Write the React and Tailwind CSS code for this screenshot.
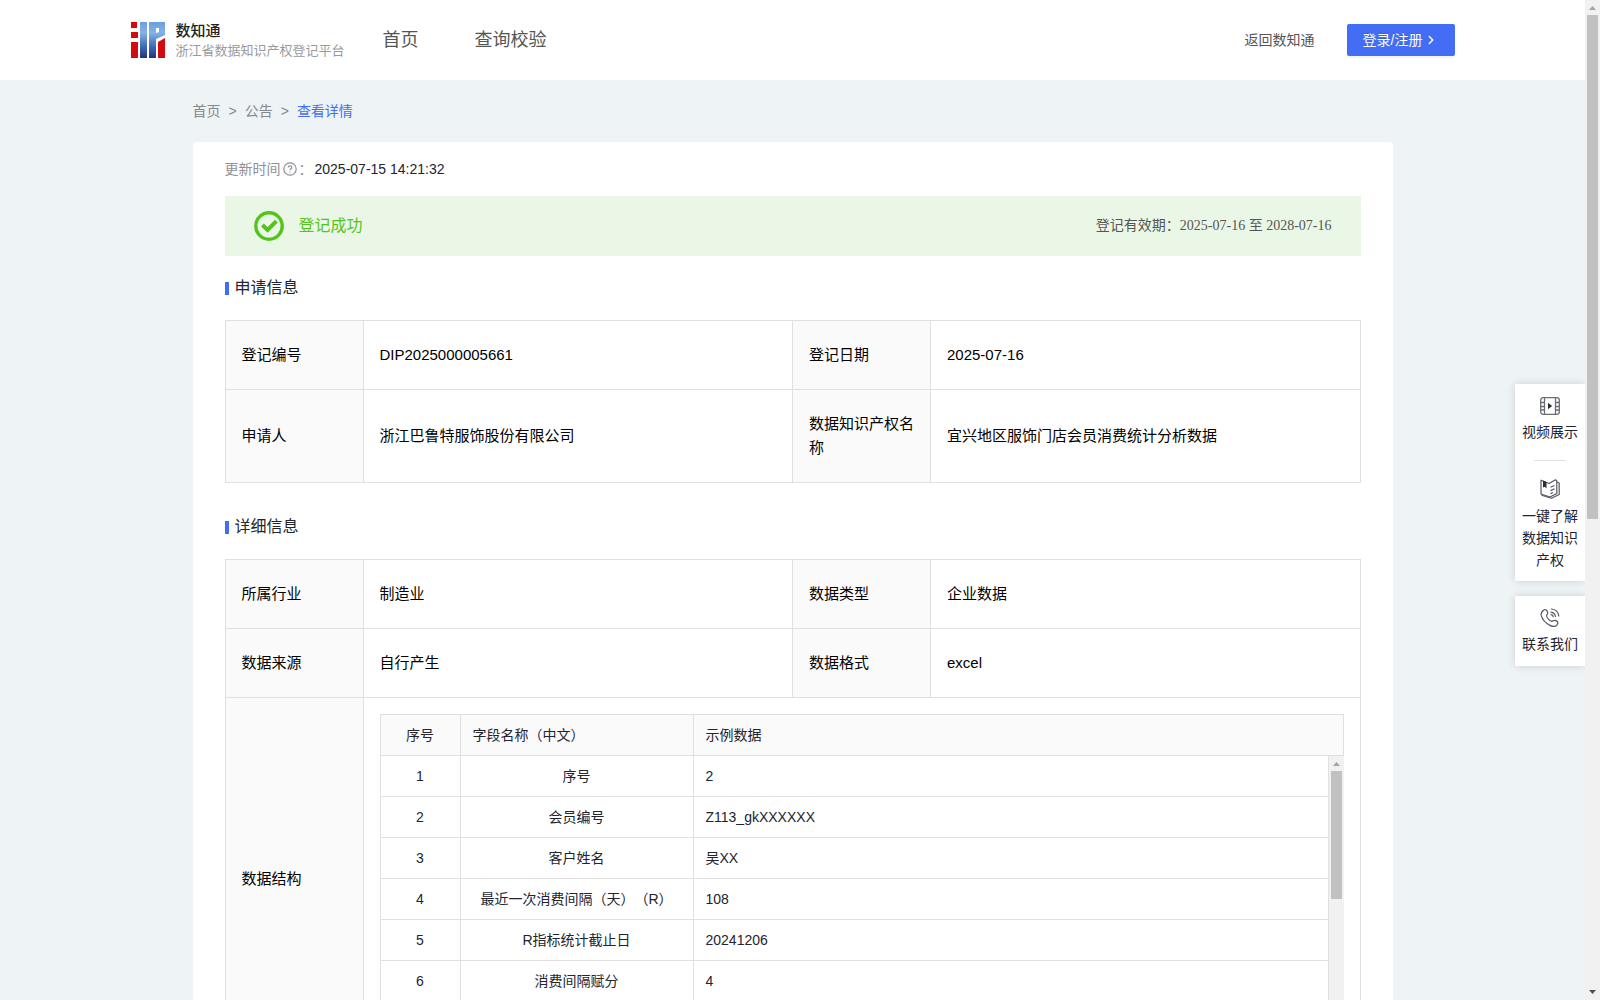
import React from 'react';
import { ChevronRight } from 'lucide-react';

const applyRows = [
  ['登记编号', 'DIP2025000005661', '登记日期', '2025-07-16'],
  ['申请人', '浙江巴鲁特服饰股份有限公司', '数据知识产权名称', '宜兴地区服饰门店会员消费统计分析数据'],
];

const detailRows = [
  ['所属行业', '制造业', '数据类型', '企业数据'],
  ['数据来源', '自行产生', '数据格式', 'excel'],
];

const fields = [
  ['1', '序号', '2'],
  ['2', '会员编号', 'Z113_gkXXXXXX'],
  ['3', '客户姓名', '吴XX'],
  ['4', '最近一次消费间隔（天）（R）', '108'],
  ['5', 'R指标统计截止日', '20241206'],
  ['6', '消费间隔赋分', '4'],
];

function Logo() {
  return (
    <svg width="34" height="36" viewBox="0 0 34 36" aria-hidden="true">
      <defs>
        <linearGradient id="ip" gradientUnits="userSpaceOnUse" x1="0" y1="0" x2="0" y2="36">
          <stop offset="0" stopColor="#6a9fdc" />
          <stop offset="0.3" stopColor="#86b2e6" />
          <stop offset="0.65" stopColor="#4470b6" />
          <stop offset="1" stopColor="#22347e" />
        </linearGradient>
      </defs>
      <rect x="0" y="0" width="6" height="6" fill="#d40a0f" />
      <rect x="0" y="10" width="7" height="6" fill="#d40a0f" />
      <rect x="0" y="20" width="7" height="16" fill="#d40a0f" />
      <rect x="9" y="0" width="7" height="36" fill="url(#ip)" />
      <path d="M18 0H34V13L25 17V36H18ZM25 6V11L28 10V6Z" fill="url(#ip)" fillRule="evenodd" />
      <path d="M27 20L34 16V36H27Z" fill="#d40a0f" />
    </svg>
  );
}

function VideoIcon() {
  return (
    <svg width="20" height="18" viewBox="0 0 20 18" fill="none" stroke="#6b6d74" strokeWidth="1.3" aria-hidden="true">
      <rect x="0.7" y="0.7" width="18.6" height="16.6" rx="2.5" />
      <path d="M4.5 1V17M15.5 1V17M1 5.5H4.5M1 9.5H4.5M1 13H4.5M15.5 5.5H19M15.5 9.5H19M15.5 13H19" />
      <path d="M8 5.8L12.2 9L8 12.2Z" fill="#2b2d35" stroke="none" />
    </svg>
  );
}

function BookIcon() {
  return (
    <svg width="20" height="20" viewBox="0 0 20 20" fill="none" stroke="#55585f" strokeWidth="1.2" strokeLinejoin="round" aria-hidden="true">
      <path d="M1 1.2L9 4.5L15.5 0.8L16.8 2V14.5L10 18L1 15Z" />
      <path d="M16.8 3L19.2 4V15.5L11.5 19.3L1.5 16.3" />
      <path d="M3 1.5L6.5 3V9.5L4.8 7.8L3 8.5Z" fill="#2b2d35" stroke="none" />
      <path d="M10.5 8.3L14.5 6.5M10.5 11.6L14.5 9.8M10.5 14.6L13 13.5" />
    </svg>
  );
}

function PhoneIcon() {
  return (
    <svg width="20" height="20" viewBox="0 0 20 20" fill="none" stroke="#55585f" strokeWidth="1.2" strokeLinecap="round" aria-hidden="true">
      <path d="M4.2 1.8C5.6 0.8 7 2.6 7.6 4.2C8.1 5.6 7 6.4 6.6 7.4C6.4 9.6 9.8 13 12 13.4C13.2 13.3 13.8 12 15.2 12.4C16.8 13 18.4 14 17.8 15.6C16.6 18.6 13.6 19.2 10.4 17.6C6 15.4 2.2 11.4 1.2 7.4C0.8 5 2 3.2 4.2 1.8Z" />
      <path d="M11 4.2C13.6 4.6 15 6 15.4 8.4M11.4 1C15.8 1.4 18.2 3.8 18.8 8" />
      <path d="M11 6.6C12.4 6.8 13 7.4 13.2 8.6" />
    </svg>
  );
}

function Arrow({ down, dark }) {
  return (
    <svg width="15" height="15" viewBox="0 0 15 15" className="shrink-0" aria-hidden="true">
      <path d={down ? 'M4 5H11L7.5 9Z' : 'M4 10H11L7.5 6Z'} fill={dark ? '#505050' : '#a3a3a3'} />
    </svg>
  );
}

function SectionTitle({ children }) {
  return (
    <h2 className="flex h-16 items-center gap-[6px] text-[16px] leading-6 text-[#23242f]">
      <span className="h-[13px] w-1 bg-[#446df6]" />
      {children}
    </h2>
  );
}

function InfoRow({ row }) {
  return (
    <tr>
      {row.map((cell, i) =>
        i % 2 === 0 ? (
          <th key={i} scope="row" className="border border-[#e0e0e0] bg-[#fafafa] px-4 py-[22px] text-left font-normal">
            {cell}
          </th>
        ) : (
          <td key={i} className="border border-[#e0e0e0] px-4 py-[22px]">
            {cell}
          </td>
        ),
      )}
    </tr>
  );
}

function InfoTable({ children }) {
  return (
    <table className="w-full table-fixed border-collapse text-[15px] leading-6 text-black">
      <colgroup>
        <col className="w-[138px]" />
        <col />
        <col className="w-[138px]" />
        <col />
      </colgroup>
      <tbody>{children}</tbody>
    </table>
  );
}

function FieldTable() {
  const cell = 'h-[41px] border-b border-l border-[#e0e0e0] px-3 font-normal';
  return (
    <div className="text-[14px] leading-5 text-[#23242f]">
      <div className="border-r border-t border-[#e0e0e0] bg-[#fafafa]">
        <table className="w-full table-fixed border-separate border-spacing-0">
          <colgroup>
            <col className="w-20" />
            <col className="w-[233px]" />
            <col />
          </colgroup>
          <thead>
            <tr>
              <th className={`${cell} text-center`}>序号</th>
              <th className={`${cell} text-left`}>字段名称（中文）</th>
              <th className={`${cell} text-left`}>示例数据</th>
            </tr>
          </thead>
        </table>
      </div>
      <div className="flex h-[287px] overflow-hidden">
        <div className="min-w-0 flex-1 border-r border-[#e0e0e0]">
          <table className="w-full table-fixed border-separate border-spacing-0">
            <colgroup>
              <col className="w-20" />
              <col className="w-[233px]" />
              <col />
            </colgroup>
            <tbody>
              {fields.map(([no, name, sample]) => (
                <tr key={no}>
                  <td className={`${cell} text-center`}>{no}</td>
                  <td className={`${cell} text-center`}>{name}</td>
                  <td className={cell}>{sample}</td>
                </tr>
              ))}
            </tbody>
          </table>
        </div>
        <div className="flex w-[15px] flex-col bg-[#f1f1f1]">
          <Arrow />
          <div className="mx-[2px] h-32 bg-[#c1c1c1]" />
        </div>
      </div>
    </div>
  );
}

export default function App() {
  return (
    <div
      lang="zh-CN"
      className="flex h-screen overflow-hidden bg-[#eef3f6] font-['Liberation_Sans','Noto_Sans_CJK_SC',sans-serif] [text-spacing-trim:space-all]"
    >
      <div className="relative min-w-0 flex-1 overflow-hidden">
        <header className="h-20 bg-white">
          <div className="mx-auto flex h-full max-w-[1324px] items-center">
            <a href="#home" className="flex w-[252px] items-center gap-[11px]">
              <Logo />
              <span className="flex flex-col whitespace-nowrap">
                <span className="text-[15px] font-medium leading-5 text-[#222]">数知通</span>
                <span className="text-[13px] leading-[19px] text-[#9a9a9e]">浙江省数据知识产权登记平台</span>
              </span>
            </a>
            <nav className="flex gap-14 text-[18px] leading-7 text-[#555]">
              <a href="#home">首页</a>
              <a href="#query">查询校验</a>
            </nav>
            <a href="#back" className="ml-auto text-[14px] leading-5 text-[#555]">返回数知通</a>
            <button
              type="button"
              className="ml-8 flex h-8 w-[108px] items-center gap-[2px] rounded-[2px] bg-[#446df6] pl-4 text-[14px] leading-5 text-white shadow-[0_2px_0_rgba(0,0,0,0.045)] [text-shadow:0_-1px_0_rgba(0,0,0,0.12)]"
            >
              登录/注册
              <ChevronRight size={14} strokeWidth={2.5} />
            </button>
          </div>
        </header>

        <main className="mx-auto max-w-[1200px]">
          <nav className="flex h-[62px] items-center gap-2 text-[14px] leading-5 text-[#86888c]">
            <a href="#home">首页</a>
            <span>&gt;</span>
            <a href="#notice">公告</a>
            <span>&gt;</span>
            <a href="#detail" className="text-[#446df6]">查看详情</a>
          </nav>

          <div className="rounded bg-white px-8 pb-8">
            <div className="flex h-[54px] items-center text-[14px] leading-5 text-[#909096]">
              更新时间
              <svg width="14" height="14" viewBox="0 0 14 14" fill="none" stroke="#909096" strokeWidth="1.2" className="mx-[2px]" aria-hidden="true">
                <circle cx="7" cy="7" r="6.2" />
                <path d="M5.2 5.6C5.2 3.4 8.8 3.4 8.8 5.5C8.8 6.8 7 6.8 7 8.3M7 9.4V10.5" />
              </svg>
              ：
              <span className="ml-[2px] text-[#23242f]">2025-07-15 14:21:32</span>
            </div>

            <div className="flex h-[60px] items-center bg-[#ebf7e6] px-[29px]">
              <svg width="30" height="30" viewBox="0 0 30 30" fill="none" stroke="#52c41a" strokeWidth="3.4" aria-hidden="true">
                <circle cx="15" cy="15" r="13.2" />
                <path d="M8.4 14L13.6 19L22.4 10.2" strokeWidth="4" />
              </svg>
              <span className="ml-[15px] text-[16px] leading-6 text-[#52c41a]">登记成功</span>
              <span className="ml-auto font-['Liberation_Serif','Noto_Sans_CJK_SC',serif] text-[14px] leading-5 text-[#555]">
                登记有效期：2025-07-16 至 2028-07-16
              </span>
            </div>

            <SectionTitle>申请信息</SectionTitle>
            <InfoTable>
              {applyRows.map((row) => (
                <InfoRow key={row[0]} row={row} />
              ))}
            </InfoTable>

            <div className="mt-3">
              <SectionTitle>详细信息</SectionTitle>
            </div>
            <InfoTable>
              {detailRows.map((row) => (
                <InfoRow key={row[0]} row={row} />
              ))}
              <tr>
                <th scope="row" className="border border-[#e0e0e0] bg-[#fafafa] px-4 text-left font-normal">数据结构</th>
                <td colSpan={3} className="border border-[#e0e0e0] p-4">
                  <FieldTable />
                </td>
              </tr>
            </InfoTable>
          </div>
        </main>

        <aside className="absolute right-0 top-96 flex w-[70px] flex-col gap-[15px] text-[14px] leading-[22px] text-[#23242f]">
          <div className="flex flex-col items-center bg-white pb-[10px] pt-[13px] shadow-[0_0_8px_rgba(0,0,0,0.15)]">
            <a href="#video" className="flex flex-col items-center gap-[6px]">
              <VideoIcon />
              视频展示
            </a>
            <span className="mb-[18px] mt-[17px] h-px w-8 bg-[#e0e0e0]" />
            <a href="#guide" className="flex w-14 flex-col items-center gap-[6px] text-center">
              <BookIcon />
              <span>一键了解数据知识产权</span>
            </a>
          </div>
          <a href="#contact" className="flex h-[70px] flex-col items-center gap-[5px] bg-white pt-[12px] shadow-[0_0_8px_rgba(0,0,0,0.15)]">
            <PhoneIcon />
            联系我们
          </a>
        </aside>
      </div>

      <div className="flex w-[15px] shrink-0 flex-col bg-[#f1f1f1]">
        <Arrow />
        <div className="mx-[2px] h-[504px] bg-[#c1c1c1]" />
        <div className="mt-auto">
          <Arrow down dark />
        </div>
      </div>
    </div>
  );
}
